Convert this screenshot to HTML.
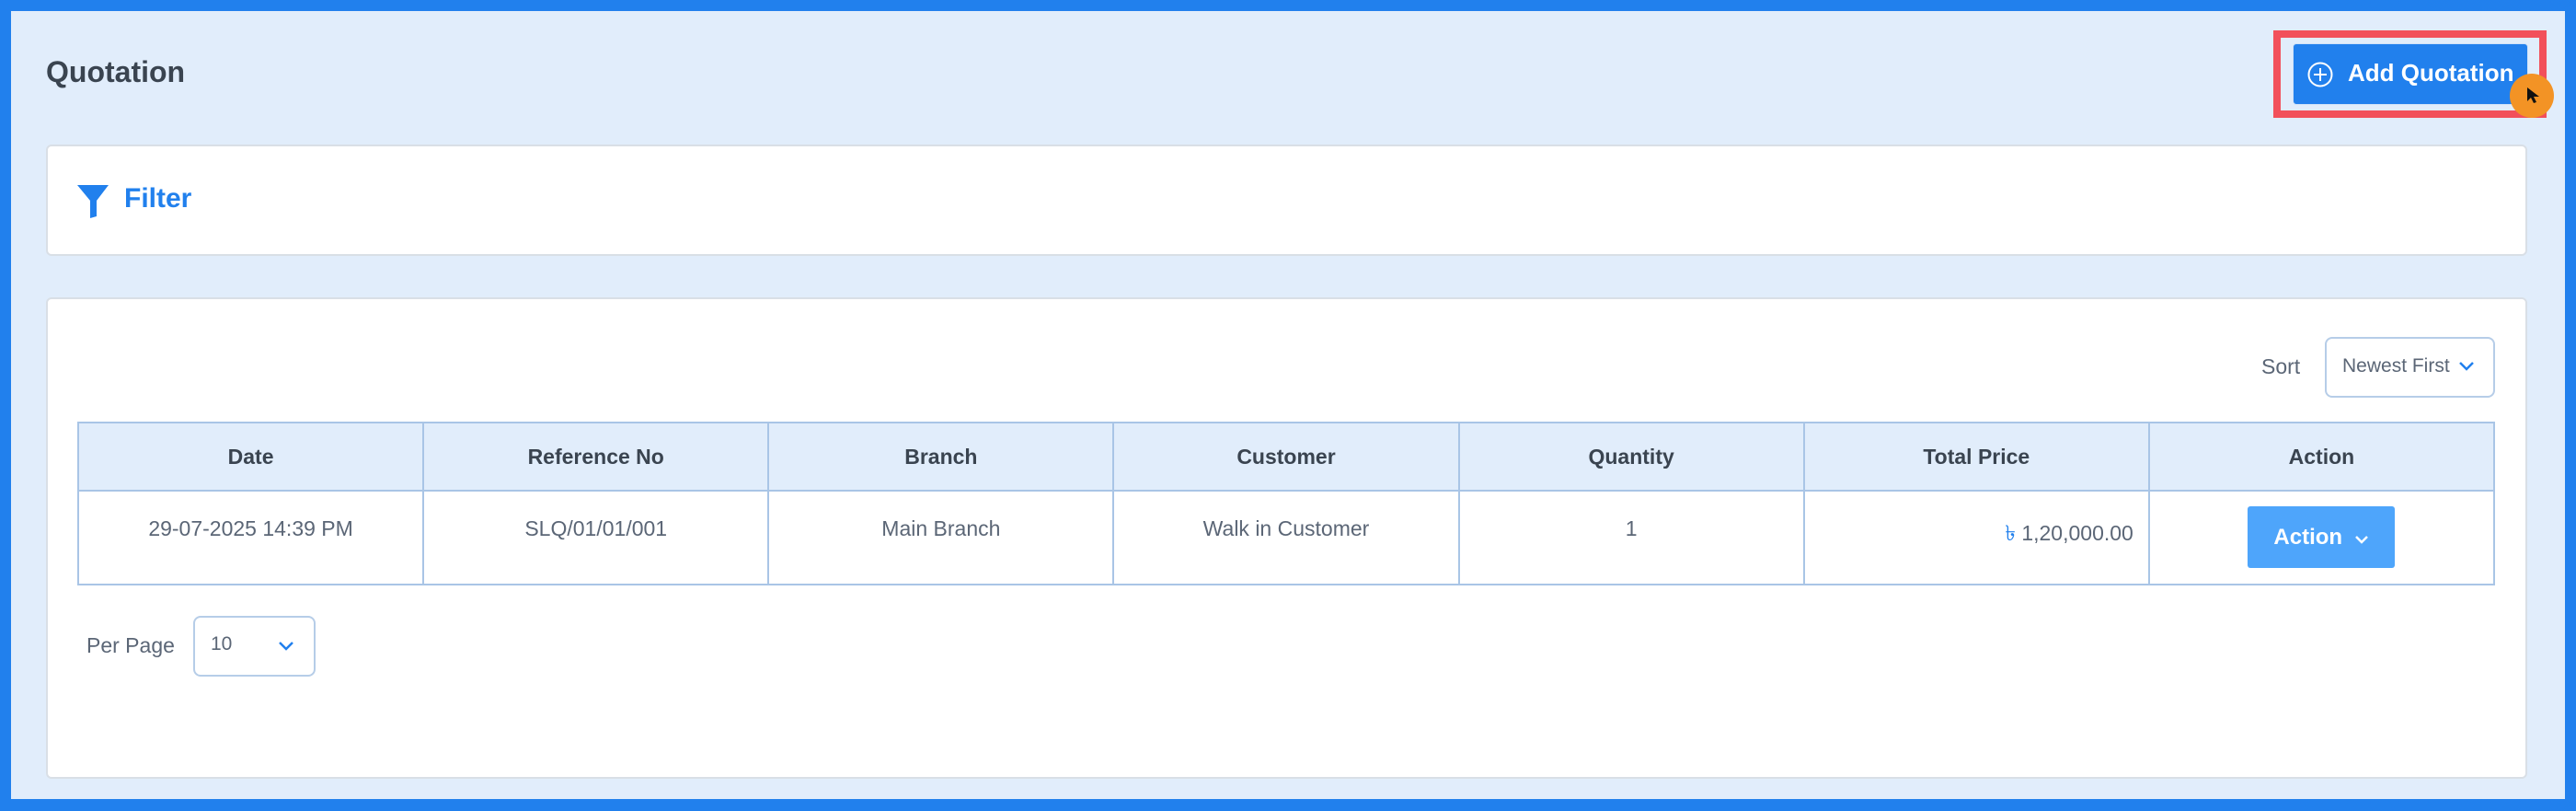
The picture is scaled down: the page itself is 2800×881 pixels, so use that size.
<!DOCTYPE html>
<html><head><meta charset="utf-8"><style>
*{box-sizing:border-box;margin:0;padding:0}
body{width:2800px;height:881px;background:#2180ed;font-family:"Liberation Sans",sans-serif;position:relative;overflow:hidden}
.bg{position:absolute;left:12px;top:12px;width:2776px;height:856px;background:#e1edfb}
.a{position:absolute}
.title{left:50px;top:60px;font-size:32px;font-weight:bold;color:#3a4450}
.card{background:#fff;border:2px solid #d9dfe6;border-radius:6px}
table{border-collapse:collapse;table-layout:fixed}
td,th{border:2px solid #a9c5e6;text-align:center;font-size:23px}
th{background:#e1edfb;color:#3a4450;font-weight:600;height:74px}
td{color:#5b6676;height:102px;vertical-align:top;padding-top:27px}
.sel{border:2px solid #b6cde8;border-radius:8px;background:#fff}
</style></head><body>
<div class="bg"></div>
<div class="a title">Quotation</div>
<div class="a" style="left:2471px;top:33px;width:297px;height:95px;border:8px solid #f2505a"></div>
<div class="a" style="left:2492px;top:47px;width:256px;height:67px;background:#2180ed;border-radius:4px;border:1px solid #d0e2f8"></div>
<svg class="a" style="left:2507px;top:66px" width="30" height="30" viewBox="0 0 30 30"><circle cx="15" cy="15" r="12.5" fill="none" stroke="#fff" stroke-width="2"/><path d="M15 8v14M8 15h14" stroke="#fff" stroke-width="2"/></svg>
<div class="a" style="left:2552px;top:64px;font-size:26px;font-weight:bold;color:#fff">Add Quotation</div>
<div class="a" style="left:2728px;top:80px;width:48px;height:48px;border-radius:50%;background:#f39325"></div>
<svg class="a" style="left:2746px;top:94px" width="16" height="20" viewBox="0 0 16 20"><path d="M1 1v15l4-4 3 6 3-1-3-6h6z" fill="#111"/></svg>
<div class="a card" style="left:50px;top:157px;width:2697px;height:121px"></div>
<svg class="a" style="left:84px;top:200px" width="34" height="37" viewBox="0 0 34 37"><path d="M0 1h34L21 18v17l-7 2V18z" fill="#2180ed"/></svg>
<div class="a" style="left:135px;top:199px;font-size:30px;font-weight:600;color:#2180ed">Filter</div>
<div class="a card" style="left:50px;top:323px;width:2697px;height:523px"></div>
<div class="a" style="left:2458px;top:385px;font-size:23px;color:#5b6676">Sort</div>
<div class="a sel" style="left:2527px;top:366px;width:185px;height:66px"></div>
<div class="a" style="left:2546px;top:386px;font-size:21px;color:#5b6676">Newest First</div>
<svg class="a" style="left:2672px;top:392px" width="18" height="12" viewBox="0 0 18 12"><path d="M2 2l7 7 7-7" fill="none" stroke="#2180ed" stroke-width="2.5"/></svg>
<table class="a" style="left:84px;top:458px;width:2628px">
<tr><th>Date</th><th>Reference No</th><th>Branch</th><th>Customer</th><th>Quantity</th><th>Total Price</th><th>Action</th></tr>
<tr><td>29-07-2025 14:39 PM</td><td>SLQ/01/01/001</td><td>Main Branch</td><td>Walk in Customer</td><td>1</td><td style="text-align:right;padding-right:16px"><span style="color:#2180ed">৳</span> 1,20,000.00</td><td style="padding-top:16px"><div style="display:inline-block;width:160px;height:67px;background:#4ea5fb;border-radius:3px;color:#fff;font-weight:600;font-size:24px;line-height:67px">Action &nbsp;<svg width="16" height="10" viewBox="0 0 16 10"><path d="M2 2l6 6 6-6" fill="none" stroke="#fff" stroke-width="2.5"/></svg></div></td></tr>
</table>
<div class="a" style="left:94px;top:688px;font-size:23px;color:#5b6676">Per Page</div>
<div class="a sel" style="left:210px;top:669px;width:133px;height:66px"></div>
<div class="a" style="left:229px;top:688px;font-size:21px;color:#5b6676">10</div>
<svg class="a" style="left:302px;top:696px" width="18" height="12" viewBox="0 0 18 12"><path d="M2 2l7 7 7-7" fill="none" stroke="#2180ed" stroke-width="2.5"/></svg>
</body></html>
